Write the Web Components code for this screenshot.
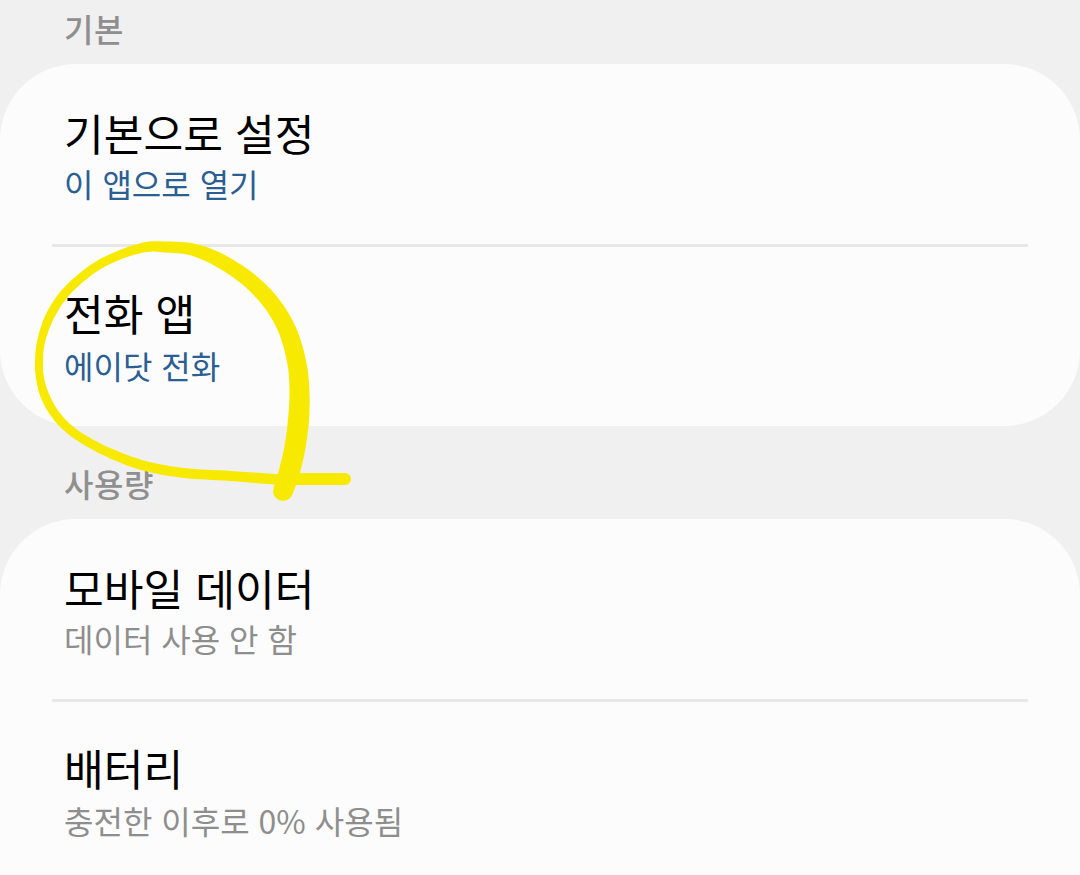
<!DOCTYPE html>
<html lang="ko">
<head>
<meta charset="utf-8">
<style>
html, body { margin: 0; height: 875px; overflow: hidden; background: #f0f0f0; }
body { font-family: "Noto Sans CJK KR", "Noto Sans", sans-serif; position: relative; }
</style>
</head>
<body>
<settings-section label="기본">
  <settings-row title="기본으로 설정" value="이 앱으로 열기" accent></settings-row>
  <settings-row title="전화 앱" value="에이닷 전화" accent></settings-row>
</settings-section>
<settings-section label="사용량" open-end>
  <settings-row title="모바일 데이터" value="데이터 사용 안 함"></settings-row>
  <settings-row title="배터리" value="충전한 이후로 0% 사용됨"></settings-row>
</settings-section>
<pen-mark></pen-mark>

<script>
class SettingsSection extends HTMLElement {
  constructor() {
    super();
    this.attachShadow({mode: 'open'});
    this.shadowRoot.innerHTML = `
      <style>
      :host { display: block; }
      :host(:not(:first-of-type)) { margin-top: 29px; }
      .label {
        height: 64px;
        box-sizing: border-box;
        padding: 5px 0 0 64px;
        font-size: 32px;
        line-height: 46px;
        font-weight: 500;
        letter-spacing: 0.5px;
        color: #8f8f8f;
      }
      .card {
        background: #fcfcfc;
        border-radius: 76px;
        overflow: hidden;
      }
      :host([open-end]) .card { height: 356px; border-radius: 76px 76px 0 0; }
      </style>
      <div class="label"></div>
      <div class="card"><slot></slot></div>
    `;
    this.shadowRoot.querySelector('.label').textContent = this.getAttribute('label');
  }
}

class SettingsRow extends HTMLElement {
  constructor() {
    super();
    this.attachShadow({mode: 'open'});
    this.shadowRoot.innerHTML = `
      <style>
      :host { display: block; height: 183px; box-sizing: border-box; padding-top: 37px; position: relative; }
      :host(:last-child) { height: 179px; padding-top: 34px; }
      .title { font-size: 43.2px; line-height: 62px; padding-left: 64px; color: #000; }
      .value { font-size: 32px; line-height: 46px; padding-left: 64px; margin-top: -3px; color: #8e8e8e; }
      :host(:last-child) .value { margin-top: -1px; }
      :host([accent]) .value { color: #2b5f93; }
      .rule { position: absolute; left: 52px; right: 52px; bottom: 0; height: 3px; background: #e8e8e8; }
      :host(:last-child) .rule { display: none; }
      </style>
      <div class="title"></div>
      <div class="value"></div>
      <div class="rule"></div>
    `;
    this.shadowRoot.querySelector('.title').textContent = this.getAttribute('title');
    this.shadowRoot.querySelector('.value').textContent = this.getAttribute('value');
  }
}

// highlighter loop: centre line x, y and pen width, traced from the photo
const pen = [[283,491,20],[289,473,21],[295,447,21],[298.5,420,21],[299.5,392,20],[297,364,19],[288.5,333,18],[275,308,17],[257,287,16],[237,271,15],[213,257,14],[190,249,12],[165,247,11],[147,247,10],[122,254,9],[94,268,9],[67,291,9],[50,316,9],[41,342,8],[39,362,8],[40,378,8],[45,396,9],[55,414,9],[69,429,9],[88,442,9],[112,454,9.5],[145,466,10],[184,473,10],[230,476,10],[285,480,11]];

function ribbon(pts) {
  const dense = [];
  for (let i = 0; i < pts.length - 1; i++) {
    const p0 = pts[Math.max(i - 1, 0)], p1 = pts[i], p2 = pts[i + 1], p3 = pts[Math.min(i + 2, pts.length - 1)];
    for (let s = 0; s < 8; s++) {
      const t = s / 8;
      dense.push([0, 1, 2].map(k =>
        0.5 * (2 * p1[k] + (p2[k] - p0[k]) * t + (2 * p0[k] - 5 * p1[k] + 4 * p2[k] - p3[k]) * t * t + (3 * p1[k] - p0[k] - 3 * p2[k] + p3[k]) * t * t * t)));
    }
  }
  dense.push(pts[pts.length - 1]);
  const left = [], right = [];
  dense.forEach((p, i) => {
    const a = dense[Math.max(i - 1, 0)], b = dense[Math.min(i + 1, dense.length - 1)];
    const dx = b[0] - a[0], dy = b[1] - a[1], len = Math.hypot(dx, dy) || 1;
    const nx = -dy / len * p[2] / 2, ny = dx / len * p[2] / 2;
    left.push(`${(p[0] + nx).toFixed(1)} ${(p[1] + ny).toFixed(1)}`);
    right.unshift(`${(p[0] - nx).toFixed(1)} ${(p[1] - ny).toFixed(1)}`);
  });
  return 'M' + left.concat(right).join('L') + 'Z';
}

class PenMark extends HTMLElement {
  constructor() {
    super();
    this.attachShadow({mode: 'open'});
    this.shadowRoot.innerHTML = `
      <style>
      :host { display: block; position: absolute; left: 0; top: 0; width: 1080px; height: 875px; pointer-events: none; }
      svg { display: block; }
      </style>
      <svg width="1080" height="875" viewBox="0 0 1080 875">
        <circle cx="283" cy="491" r="10" fill="#f7ea00"/>
        <path fill="#f7ea00" d="${ribbon(pen)}"/>
        <path stroke="#f7ea00" stroke-width="12" stroke-linecap="round" fill="none" d="M285 479H345"/>
      </svg>
    `;
  }
}

customElements.define('settings-section', SettingsSection);
customElements.define('settings-row', SettingsRow);
customElements.define('pen-mark', PenMark);
</script>
</body>
</html>
